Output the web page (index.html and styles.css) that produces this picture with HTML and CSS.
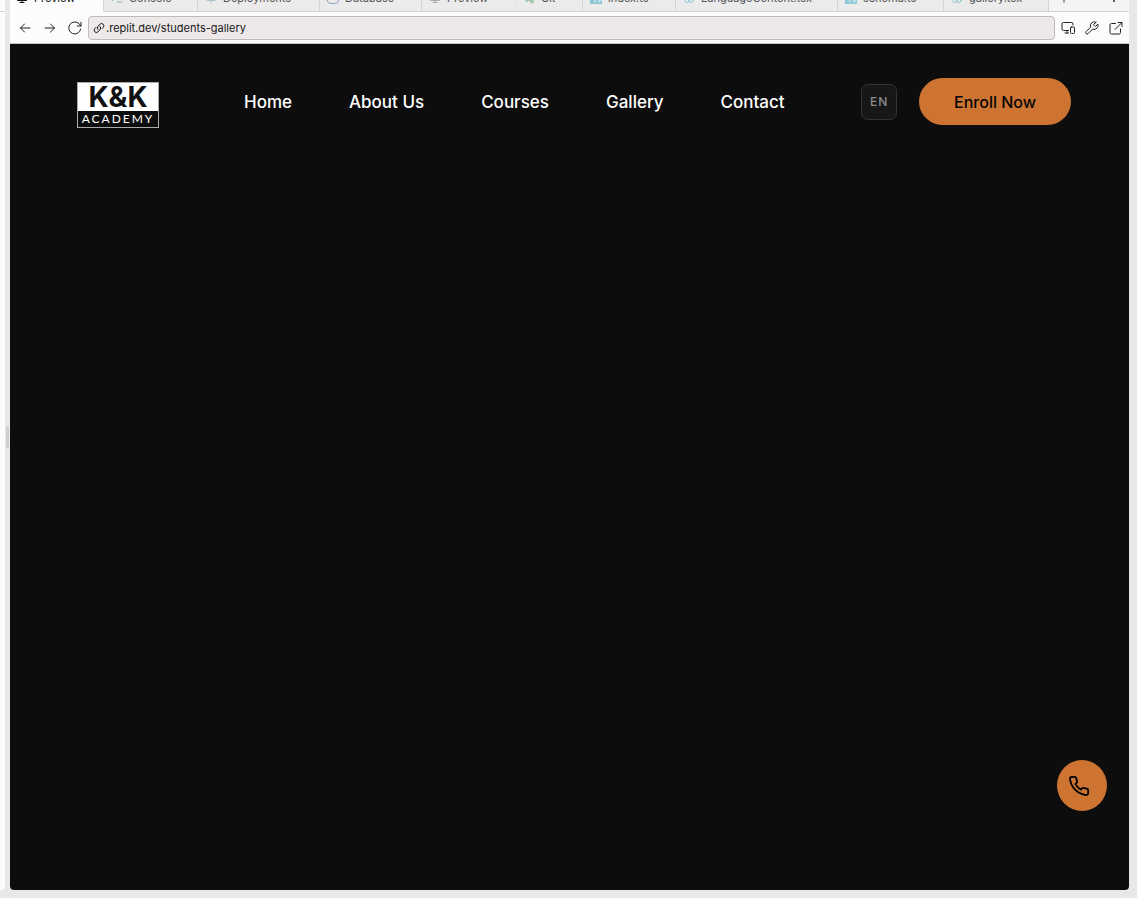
FILE: index.html
```html
<!DOCTYPE html>
<html lang="en">
<head>
<meta charset="utf-8">
<title>Preview</title>
<link rel="stylesheet" href="styles.css">
</head>
<body>
<svg class="sprite" aria-hidden="true">
  <symbol id="monitor" viewBox="0 0 12 12"><path d="M1 1.500h10v6H1zM6 7.500v3M1.500 8.500h9M4 10.500h4"/></symbol>
  <symbol id="react" viewBox="0 0 12 12"><circle cx="4" cy="5" r="2"/><circle cx="8" cy="5" r="2"/><circle cx="4" cy="8.500" r="2"/><circle cx="8" cy="8.500" r="2"/></symbol>
  <symbol id="ts" viewBox="0 0 12 12"><rect x="0" y="0" width="12" height="12" fill="#8fc8d6" stroke="none"/><path d="M3 5h4M5 5v5M10.500 6.500q-2-1-2 .5t2 1.500q0 2-2.500 1" stroke="#e4f1f4"/></symbol>
</svg>
<div class="workspace">
  <aside class="side"><div class="side-tabs"></div></aside>
  <div class="gutter"><span class="grip"></span></div>
  <main class="pane">
    <div class="tabs">
      <button class="tab active tab-preview"><svg class="tab-icon"><use href="#monitor"/></svg>Preview</button>
      <button class="tab tab-console"><svg class="tab-icon green" viewBox="0 0 12 12"><path d="M1 3l3 3-3 3M6 10h5"/></svg>Console</button>
      <button class="tab tab-deploy"><svg class="tab-icon teal" viewBox="0 0 12 12"><path d="M6 1v10M2 8.500h8M3 4l3-3 3 3"/></svg>Deployments</button>
      <button class="tab tab-database"><svg class="tab-icon blue" viewBox="0 0 12 12"><path d="M.5 2v7q0 2.500 5.500 2.500T11.500 9V2"/><ellipse cx="6" cy="2" rx="5.500" ry="1.500"/></svg>Database</button>
      <button class="tab soft tab-second"><svg class="tab-icon gray"><use href="#monitor"/></svg>Preview</button>
      <button class="tab tab-git"><svg class="tab-icon green" viewBox="0 0 12 12"><path d="M4 5l5 5M4 8h3"/><circle cx="4" cy="8" r="1.500"/><circle cx="9" cy="9.500" r="1.500"/></svg>Git</button>
      <button class="tab tab-index"><svg class="tab-icon"><use href="#ts"/></svg>index.ts</button>
      <button class="tab tab-language"><svg class="tab-icon cyan"><use href="#react"/></svg>LanguageContent.tsx</button>
      <button class="tab tab-schema"><svg class="tab-icon"><use href="#ts"/></svg>schema.ts</button>
      <button class="tab tab-gallery"><svg class="tab-icon cyan"><use href="#react"/></svg>gallery.tsx</button>
      <div class="tab-tools">
        <button class="tool" aria-label="New tab"><svg class="tab-icon" viewBox="0 0 12 12"><path d="M6 2v8M2 6h8"/></svg></button>
        <button class="tool" aria-label="More"><svg class="tab-icon dots" viewBox="0 0 12 12"><circle cx="6" cy="1" r="1"/><circle cx="6" cy="5" r="1"/><circle cx="6" cy="9" r="1"/></svg></button>
      </div>
    </div>
    <div class="toolbar">
      <button class="tool" aria-label="Back"><svg class="ic" viewBox="0 0 16 16"><path d="M13 8H3.500M7.500 4l-4 4 4 4"/></svg></button>
      <button class="tool" aria-label="Forward"><svg class="ic" viewBox="0 0 16 16"><path d="M3 8h9.500M8.500 4l4 4-4 4"/></svg></button>
      <button class="tool" aria-label="Reload"><svg class="ic" viewBox="0 0 16 16"><path d="M13.700 9A6 6 0 1 1 12.300 4L14 6M14 2.300V6h-3.700"/></svg></button>
      <div class="address">
        <svg class="link" viewBox="0 0 12 12"><path d="M5 7.500a2.300 2.300 0 0 1 0-3.200L7 2.200a2.200 2.200 0 0 1 3.200 3.200L9 6.600M7 4.500a2.300 2.300 0 0 1 0 3.200L5 9.800a2.200 2.200 0 0 1-3.200-3.200L3 5.400"/></svg>
        <span>.replit.dev/students-gallery</span>
      </div>
      <div class="actions">
        <button class="tool" aria-label="Devices"><svg class="ic" viewBox="0 0 16 16"><path d="M8.500 10.500H3.500a1.500 1.500 0 0 1-1.500-1.500V4a1.500 1.500 0 0 1 1.500-1.500h8A1.500 1.500 0 0 1 13 4v1M5 13h3.500M7 10.500V13"/><rect x="10.500" y="7" width="4" height="6.500" rx="1"/></svg></button>
        <button class="tool" aria-label="Developer tools"><svg class="ic" viewBox="0 0 16 16"><path d="M9.800 4.200a.7.7 0 0 0 0 .9l1.100 1.100a.7.7 0 0 0 .9 0l2.100-2.100a4 4 0 0 1-5.300 5l-4.500 4.500a1.400 1.400 0 0 1-2-2l4.500-4.500a4 4 0 0 1 5.300-5z"/></svg></button>
        <button class="tool" aria-label="Open in new tab"><svg class="ic" viewBox="0 0 16 16"><path d="M7.500 3.500H3.500a1.500 1.500 0 0 0-1.500 1.500v7.500A1.500 1.500 0 0 0 3.500 14H11a1.500 1.500 0 0 0 1.500-1.500V9M10 2.500h4v4M14 2.500L7 9.500"/></svg></button>
      </div>
    </div>
    <div class="site">
      <header class="site-header">
        <a class="logo" href="#"><span class="logo-top">K&amp;K</span><span class="logo-bottom">ACADEMY</span></a>
        <nav class="nav">
          <a href="#">Home</a><a href="#">About Us</a><a href="#">Courses</a><a href="#">Gallery</a><a href="#">Contact</a>
        </nav>
        <button class="lang">EN</button>
        <button class="enroll">Enroll Now</button>
      </header>
      <button class="call" aria-label="Call"><svg viewBox="0 0 24 24"><path d="M22 16.920v3a2 2 0 0 1-2.180 2 19.790 19.790 0 0 1-8.630-3.070 19.500 19.500 0 0 1-6-6 19.790 19.790 0 0 1-3.070-8.670A2 2 0 0 1 4.110 2h3a2 2 0 0 1 2 1.720 12.840 12.840 0 0 0 .7 2.810 2 2 0 0 1-.45 2.110L8.090 9.910a16 16 0 0 0 6 6l1.270-1.270a2 2 0 0 1 2.110-.45 12.840 12.840 0 0 0 2.810.7A2 2 0 0 1 22 16.920z"/></svg></button>
    </div>
  </main>
</div>
</body>
</html>
```
FILE: styles.css
```css
* { box-sizing: border-box; }
body { margin: 0; background: #e8e8e8; font-family: Inter, "Liberation Sans", sans-serif; }
button { margin: 0; padding: 0; border: 0; background: none; font: inherit; color: inherit; cursor: pointer; }
svg { fill: none; stroke: currentColor; stroke-linecap: round; stroke-linejoin: round; flex: none; }
.sprite { display: none; }

.workspace { display: flex; height: 100vh; padding: 0 8px 8px 0; }
.side { width: 5px; background: #fcfcfc; border-radius: 0 0 4px 0; }
.side-tabs { height: 12px; border-bottom: 1px solid #d2d2d2; }
.gutter { width: 5px; display: flex; align-items: center; justify-content: center; }
.grip { width: 3px; height: 22px; margin-top: -16px; border-radius: 2px; background: #cfcfcf; }
.pane { flex: 1; min-width: 0; display: flex; flex-direction: column; overflow: hidden; border-radius: 0 0 4px 4px; background: #fcfcfc; }

/* The tab strip shows only the lower edge of its tabs. */
.tabs { height: 12px; display: flex; align-items: flex-end; overflow: hidden; background: #f4f4f4; }
.tab { flex: none; height: 28px; padding-left: 7px; display: flex; align-items: center; gap: 6px; white-space: nowrap; font-size: 11px; line-height: 16px; color: #555; background: #ebebeb; border-right: 1px solid #d4d4d4; border-bottom: 1px solid #d4d4d4; }
.tab.active { padding-left: 6px; color: #111; background: #fcfcfc; border-bottom-color: #fcfcfc; }
.tab.soft { border-right-color: #e5e5e5; }
.tab-icon { width: 12px; height: 12px; }
.tab-preview { width: 94px; }
.tab-console { width: 94px; }
.tab-deploy { width: 122px; }
.tab-database { width: 102px; }
.tab-second { width: 94px; }
.tab-git { width: 67px; }
.tab-index { width: 93px; }
.tab-language { width: 162px; }
.tab-schema { width: 106px; }
.tab-gallery { width: 105px; }
.gray { color: #aaa; }
.teal { color: #a9c9cb; }
.blue { color: #8ea6c4; }
.green { color: #8db89c; }
.cyan { color: #8fc8d6; }
.tab-tools { flex: 1; height: 28px; padding-left: 9px; padding-right: 9px; display: flex; align-items: center; justify-content: space-between; color: #333; border-bottom: 1px solid #d4d4d4; }
.dots { fill: currentColor; stroke: none; }

.toolbar { height: 32px; padding: 3px 1px 3px 2px; display: flex; align-items: center; border-bottom: 1px solid #c8c8c8; color: #222; }
.tool { display: flex; align-items: center; justify-content: center; }
.toolbar .tool { width: 24px; flex: none; }
.toolbar > .tool { width: 25px; }
.actions { display: flex; margin-left: 1px; }
.ic { width: 16px; height: 16px; }
.address { flex: 1; height: 24px; margin-left: 1px; padding: 0 4px; display: flex; align-items: center; gap: 1px; border: 1px solid #bdbabb; border-radius: 4px; background: #eee8e9; font-size: 11px; line-height: 16px; color: #161616; }
.address span { white-space: nowrap; }
.link { width: 12px; height: 12px; }

.site { position: relative; flex: 1; background: #0d0d0d; color: #fff; }
.site-header { padding: 31px 58px 0 67px; display: flex; align-items: center; }
.logo { width: 82px; height: 46px; margin-top: 7px; display: flex; flex-direction: column; border: 1px solid #aaa; color: #fff; text-decoration: none; text-align: center; }
.logo-top { height: 28px; background: #fff; color: #111; font-size: 28px; line-height: 28px; font-weight: 700; }
.logo-bottom { font-family: Lato, sans-serif; font-size: 12px; line-height: 16px; letter-spacing: 2px; }
.nav { margin-left: 85px; display: flex; gap: 57px; }
.nav a { color: #fff; text-decoration: none; font-size: 17px; line-height: 28px; font-weight: 500; white-space: nowrap; }
.lang { width: 36px; height: 36px; margin-left: auto; border: 1px solid #333; border-radius: 7px; background: #171717; color: #8c8c8c; font-size: 12px; line-height: 20px; font-weight: 500; letter-spacing: 1px; }
.enroll { height: 47px; margin-left: 22px; padding: 0 35px; border-radius: 24px; background: #cd7432; color: #050505; font-size: 16px; line-height: 24px; font-weight: 500; white-space: nowrap; }
.call { position: absolute; right: 22px; bottom: 79px; width: 50px; height: 51px; padding-right: 6px; display: flex; align-items: center; justify-content: center; border-radius: 50%; background: #cd7432; color: #000; }
.call svg { width: 22px; height: 22px; stroke-width: 2; }
```
